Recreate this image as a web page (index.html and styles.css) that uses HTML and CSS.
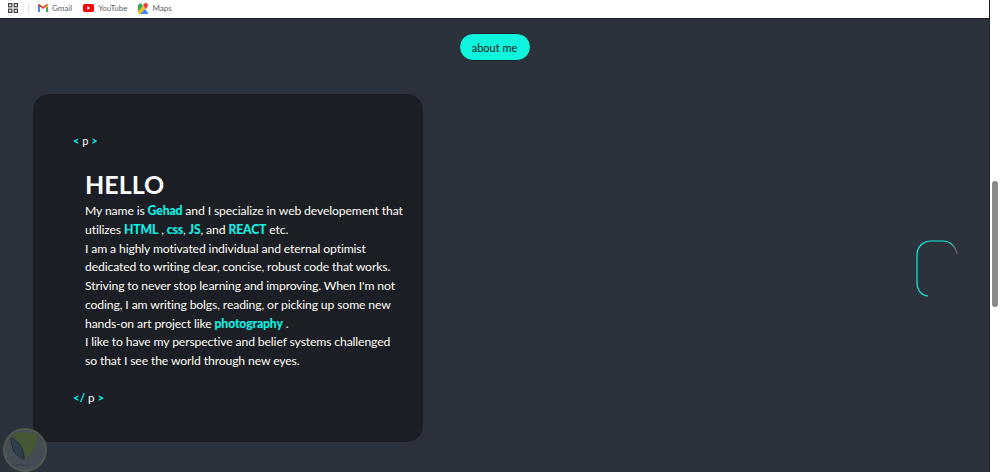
FILE: index.html
```html
<!DOCTYPE html>
<html lang="en">
<head>
<meta charset="utf-8">
<title>About me</title>
<link rel="stylesheet" href="styles.css">
</head>
<body>
<div class="window">
  <div class="viewport">
    <nav class="bookmarks">
      <svg class="apps" width="10" height="10" viewBox="0 0 10 10"><g fill="none" stroke="#3c4043" stroke-width="1.2"><rect x=".6" y=".6" width="3.2" height="3.2"/><rect x="6.2" y=".6" width="3.2" height="3.2"/><rect x=".6" y="6.2" width="3.2" height="3.2"/><rect x="6.2" y="6.2" width="3.2" height="3.2"/></g></svg>
      <span class="divider"></span>
      <a class="mark mark-gmail"><svg width="10" height="8" viewBox="0 0 10 8"><path fill="#4285f4" d="M0 1h2v7H.7A.7.7 0 0 1 0 7.300z"/><path fill="#34a853" d="M8 1h2v6.300a.7.7 0 0 1-.7.7H8z"/><path fill="#ea4335" d="M0 1.200C0 .2 1 -.2 1.700.3L5 2.800 8.300.3C9 -.2 10 .2 10 1.200L5 5z"/><path fill="#fbbc04" d="M8 1.800 10 .8V2.500L8 4z"/></svg>Gmail</a>
      <a class="mark mark-youtube"><svg width="11" height="8" viewBox="0 0 11 8"><rect width="11" height="8" rx="1.800" fill="#f00"/><path fill="#fff" d="M4.300 2.200v3.600L7.500 4z"/></svg>YouTube</a>
      <a class="mark mark-maps"><svg width="10" height="11" viewBox="0 0 10 11"><path fill="#34a853" d="M0 2 3 0 5 3 0 9z"/><path fill="#fbbc04" d="M0 9 5 3 7 6 2 11H1L0 10z"/><path fill="#4285f4" d="M2 11 7 6 10 10V11z"/><path fill="#ea4335" d="M7.500 0A2.300 2.300 0 0 1 10 2.300C10 3.800 8.500 5 7.700 6.300 7 5 5.300 3.800 5.300 2.300A2.300 2.300 0 0 1 7.500 0z"/></svg>Maps</a>
    </nav>
    <main class="page">
      <header class="hero"><button class="pill">about me</button></header>
      <section class="columns">
        <article class="card">
          <div class="tag tag-open"><b>&lt;</b> p <b>&gt;</b></div>
          <div class="bio">
            <h1>HELLO</h1>
            <p>My name is <strong>Gehad</strong> and I specialize in web developement that utilizes <strong>HTML</strong> , <strong>css</strong>, <strong>JS</strong>, and <strong>REACT</strong> etc.<br>
            I am a highly motivated individual and eternal optimist dedicated to writing clear, concise, robust code that works. Striving to never stop learning and improving. When I'm not coding, I am writing bolgs, reading, or picking up some new hands-on art project like <strong>photography</strong> .<br>
            I like to have my perspective and belief systems challenged so that I see the world through new eyes.</p>
          </div>
          <div class="tag tag-close"><b>&lt;/</b> p <b>&gt;</b></div>
        </article>
        <aside class="visual">
          <svg width="42" height="58" viewBox="0 0 42 58" fill="none">
            <defs><linearGradient id="fade" x1="0" y1="0" x2="1" y2="0"><stop offset="0" stop-color="#12f0e0"/><stop offset=".8" stop-color="#12f0e0"/><stop offset="1" stop-color="#d58a8a" stop-opacity=".5"/></linearGradient></defs>
            <path stroke="url(#fade)" stroke-width="1.200" d="M41 14C39.500 6 34 1 27 1H15C7 1 1 7 1 15V42C1 50 5 55.500 12 56"/>
          </svg>
        </aside>
      </section>
    </main>
    <svg class="watermark" width="46" height="46" viewBox="0 0 46 46"><circle cx="23" cy="23" r="21" fill="#4d535b" fill-opacity=".8" stroke="#566250" stroke-opacity=".8" stroke-width="2"/><path fill="#465735" d="M10 8C17 4 29 4 36 8 35 17 32 26 23 32 21 23 18 15 10 8z"/><path fill="#2c3f4b" stroke="#232b31" stroke-width="1" d="M9 11C15 13 22 20 22 32 14 30 9 22 9 11z"/><path fill="none" stroke="#3d4650" stroke-width="1.500" d="M13 38H33"/></svg>
  </div>
  <div class="scrollbar"><div class="thumb"></div></div>
</div>
</body>
</html>
```
FILE: styles.css
```css
* { box-sizing: border-box; }
html, body { margin: 0; height: 100%; overflow: hidden; }
body { font-family: Lato, "Open Sans", sans-serif; background: #2b323b; }
.window { display: flex; height: 472px; }
.viewport { position: relative; flex: 1; display: flex; flex-direction: column; min-width: 0; overflow: hidden; }

.bookmarks { height: 19px; flex: none; background: #fff; border-bottom: 1px solid #1b1e24; display: flex; align-items: center; padding-left: 8px; padding-bottom: 2px; font-size: 8px; color: #5a5f66; }
.apps { flex: none; }
.divider { width: 1px; height: 11px; background: #d6e2f2; margin: 0 9px 0 10px; }
.mark { display: flex; align-items: center; gap: 4px; }
.mark-youtube { margin-left: 11px; }
.mark-maps { margin-left: 11px; }

.page { flex: 1; display: flex; flex-direction: column; min-height: 0; }
.hero { display: flex; justify-content: center; padding-top: 14px; }
.pill { width: 72px; height: 28px; padding: 0; border: 1px solid #20232a; border-radius: 14px; background: #0ff5dd; color: #111a22; font: 11px Lato, "Open Sans", sans-serif; }
.columns { display: flex; justify-content: space-between; align-items: flex-start; padding: 33px 31px 0 33px; }

.card { width: 390px; height: 348px; background: #1b1e24; border-radius: 16px; padding: 40px 18px 0 40px; color: #fff; font-size: 11px; }
.tag { line-height: 14px; }
.tag b { color: #10f0e4; font-weight: 700; }
.tag-close { margin-top: 20px; font-size: 11.500px; }
.bio { padding-left: 12px; padding-top: 19px; }
.bio h1 { margin: 0; font-size: 25px; line-height: 35px; font-weight: 700; }
.bio p { margin: 0; font-size: 12.200px; letter-spacing: -0.13px; line-height: 18.750px; color: #fffdf5; }
.bio strong { color: #10f0e4; font-weight: 900; }

.visual { display: flex; padding-top: 146px; }

.watermark { position: absolute; left: 2px; top: 427px; }

.scrollbar { width: 11px; flex: none; background: #fff; border-left: 1px solid #1b1e24; padding-top: 181px; display: flex; justify-content: center; }
.thumb { width: 6px; height: 126px; border-radius: 3px; background: #8a8a8a; }
```
